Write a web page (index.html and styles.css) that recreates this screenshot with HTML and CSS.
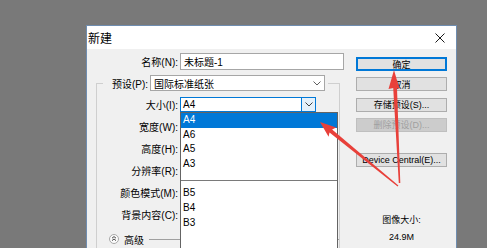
FILE: index.html
```html
<!DOCTYPE html>
<html lang="zh-CN">
<head>
  <meta charset="UTF-8" />
  <title>新建</title>
  <link rel="stylesheet" href="styles.css">
</head>
<body>
  <div class="dialog">
    <div class="titlebar">
      <span class="title">新建</span>
      <svg class="close" width="10" height="10" viewBox="0 0 10 10">
        <path d="M0.5 0.5 L9.5 9.5 M9.5 0.5 L0.5 9.5" stroke="#1a1a1a" stroke-width="1" fill="none"/>
      </svg>
    </div>

    <div class="dialog-body">
      <div class="form">
        <div class="row name-row">
          <span class="label name-label">名称(N):</span>
          <div class="textbox name-box">未标题-1</div>
        </div>

        <fieldset class="group">
          <legend class="preset">
            <div class="preset-inner">
              <span class="preset-label">预设(P):</span>
              <div class="combo preset-combo">
                <span>国际标准纸张</span>
                <svg class="chevron" width="8" height="5" viewBox="0 0 8 5"><path d="M0.5 0.5 L4 4 L7.5 0.5" stroke="#606060" fill="none"/></svg>
              </div>
            </div>
          </legend>

          <div class="fields">
            <div class="row size-row">
              <span class="label">大小(I):</span>
              <div class="combo size-combo">
                <span>A4</span>
                <div class="drop-btn">
                  <svg width="8" height="5" viewBox="0 0 8 5"><path d="M0.5 0.5 L4 4 L7.5 0.5" stroke="#404040" fill="none"/></svg>
                </div>
              </div>
            </div>
            <div class="row"><span class="label">宽度(W):</span><div class="textbox small-box"></div></div>
            <div class="row"><span class="label">高度(H):</span><div class="textbox small-box"></div></div>
            <div class="row"><span class="label">分辨率(R):</span><div class="textbox small-box"></div></div>
            <div class="row"><span class="label">颜色模式(M):</span><div class="textbox small-box"></div></div>
            <div class="row"><span class="label">背景内容(C):</span><div class="textbox small-box"></div></div>
            <div class="advanced">
              <svg class="adv-icon" width="10" height="10" viewBox="0 0 10 10">
                <circle cx="5" cy="5" r="4.5" fill="#fbfbfb" stroke="#a8a8a8"/>
                <path d="M3 4.2 L5 2.6 L7 4.2 M3 6.6 L5 5 L7 6.6" stroke="#333" stroke-width="0.9" fill="none"/>
              </svg>
              <span class="adv-label">高级</span>
              <span class="adv-line"></span>
            </div>
          </div>
        </fieldset>

        <ul class="dropdown">
          <li class="selected">A4</li>
          <li>A6</li>
          <li>A5</li>
          <li>A3</li>
          <li class="separator"></li>
          <li>B5</li>
          <li>B4</li>
          <li>B3</li>
        </ul>
      </div>

      <div class="buttons">
        <div class="btn default">确定</div>
        <div class="btn">取消</div>
        <div class="btn">存储预设(S)...</div>
        <div class="btn disabled">删除预设(D)...</div>
        <div class="btn device">Device Central(E)...</div>
        <div class="info-title">图像大小:</div>
        <div class="info-value">24.9M</div>
      </div>
    </div>
  </div>

  <svg class="arrows" width="487" height="248" viewBox="0 0 487 248">
    <polygon fill="#e8403a" points="394,70 399.5,89 397,88 400.3,183 398.8,183 393.2,88 388.5,89"/>
    <polygon fill="#e8403a" points="320,122 336.2,127.5 332.1,129.4 398.4,185.5 397.6,186.5 329.5,132.4 328.6,136.7"/>
  </svg>
</body>
</html>
```

FILE: styles.css
```css
* {
  box-sizing: border-box;
}

body {
  margin: 0;
  height: 248px;
  overflow: hidden;
  background-color: #797979;
  font-family: "Liberation Sans", "Noto Sans CJK SC", sans-serif;
  font-size: 10px;
  color: #000;
  position: relative;
}

.dialog {
  margin: 25px 0 0 86px;
  width: 371px;
  height: 223px;
  border: 1px solid #6f8db0;
  border-bottom: none;
  background: #f0f0f0;
  overflow: hidden;
}

.titlebar {
  height: 23px;
  background: #fff;
  display: flex;
  align-items: center;
  padding-left: 1px;
}

.title {
  font-size: 12px;
}

.close {
  margin-left: auto;
  margin-right: 11px;
}

.dialog-body {
  display: flex;
}

.form {
  position: relative;
  width: 269px;
  height: 199px;
  padding-top: 4px;
}

.row {
  display: flex;
  align-items: center;
  height: 16px;
}

.label {
  width: 81px;
  margin-right: 2px;
  text-align: right;
  white-space: nowrap;
}

.name-row {
  height: 17px;
}

.name-label {
  width: 91px;
}

.textbox {
  height: 100%;
  background: #fff;
  border: 1px solid #a6a6a6;
  padding-left: 3px;
  display: flex;
  align-items: center;
}

.name-box {
  width: 164px;
}

.small-box {
  width: 70px;
}

.group {
  margin: 5px 0 0 9px;
  width: 244px;
  height: 173px;
  padding: 6px 0 0 0;
  border: 1px solid #cfcfcf;
  border-bottom: none;
}

.preset {
  margin-left: 6px;
  padding: 0 3px 0 9px;
}

.preset-inner {
  display: flex;
  align-items: center;
  height: 16px;
}

.preset-label {
  margin-right: 2px;
}

.combo {
  height: 100%;
  background: #fff;
  border: 1px solid #a6a6a6;
  padding-left: 3px;
  display: flex;
  align-items: center;
}

.preset-combo {
  width: 175px;
}

.chevron {
  margin-left: auto;
  margin-right: 3px;
}

.fields {
  display: flex;
  flex-direction: column;
  gap: 6px;
}

.size-row {
  height: 15px;
}

.size-combo {
  width: 136px;
  border-color: #0078d7;
  padding-left: 2px;
}

.drop-btn {
  margin-left: auto;
  width: 14px;
  height: 100%;
  background: #e5f1fb;
  border-left: 1px solid #0078d7;
  display: flex;
  align-items: center;
  justify-content: center;
}

.advanced {
  display: flex;
  align-items: center;
  height: 16px;
  margin-top: 3px;
  padding-left: 12px;
}

.adv-icon {
  margin-right: 5px;
}

.adv-label {
  margin-right: 5px;
}

.adv-line {
  flex: 1;
  height: 1px;
  background: #a0a0a0;
}

.dropdown {
  position: absolute;
  left: 93px;
  top: 63px;
  width: 158px;
  height: 136px;
  margin: 0;
  padding: 0;
  list-style: none;
  background: #fff;
  border: 1px solid #646464;
  border-bottom: none;
}

.dropdown li {
  height: 14.7px;
  line-height: 14.7px;
  padding-left: 2px;
}

.dropdown .selected {
  background: #0078d7;
  color: #fff;
}

.dropdown .separator {
  position: relative;
}

.dropdown .separator::after {
  content: "";
  position: absolute;
  left: 0;
  right: 0;
  top: 8px;
  height: 1px;
  background: #7a7a7a;
}

.buttons {
  width: 91px;
  padding-top: 8px;
  display: flex;
  flex-direction: column;
  font-size: 9px;
}

.btn {
  height: 14px;
  margin-bottom: 6.3px;
  background: #e1e1e1;
  border: 1px solid #adadad;
  display: flex;
  align-items: center;
  justify-content: center;
  white-space: nowrap;
}

.btn.default {
  border-color: #0078d7;
  box-shadow: inset 0 0 0 1px #0078d7;
}

.btn.disabled {
  background: #cccccc;
  border-color: #bfbfbf;
  color: #a0a0a0;
}

.btn.device {
  margin-top: 15px;
}

.info-title,
.info-value {
  text-align: center;
  line-height: 12px;
}

.info-title {
  margin-top: 41px;
}

.info-value {
  margin-top: 5px;
}

.arrows {
  position: absolute;
  left: 0;
  top: 0;
  pointer-events: none;
}
```
